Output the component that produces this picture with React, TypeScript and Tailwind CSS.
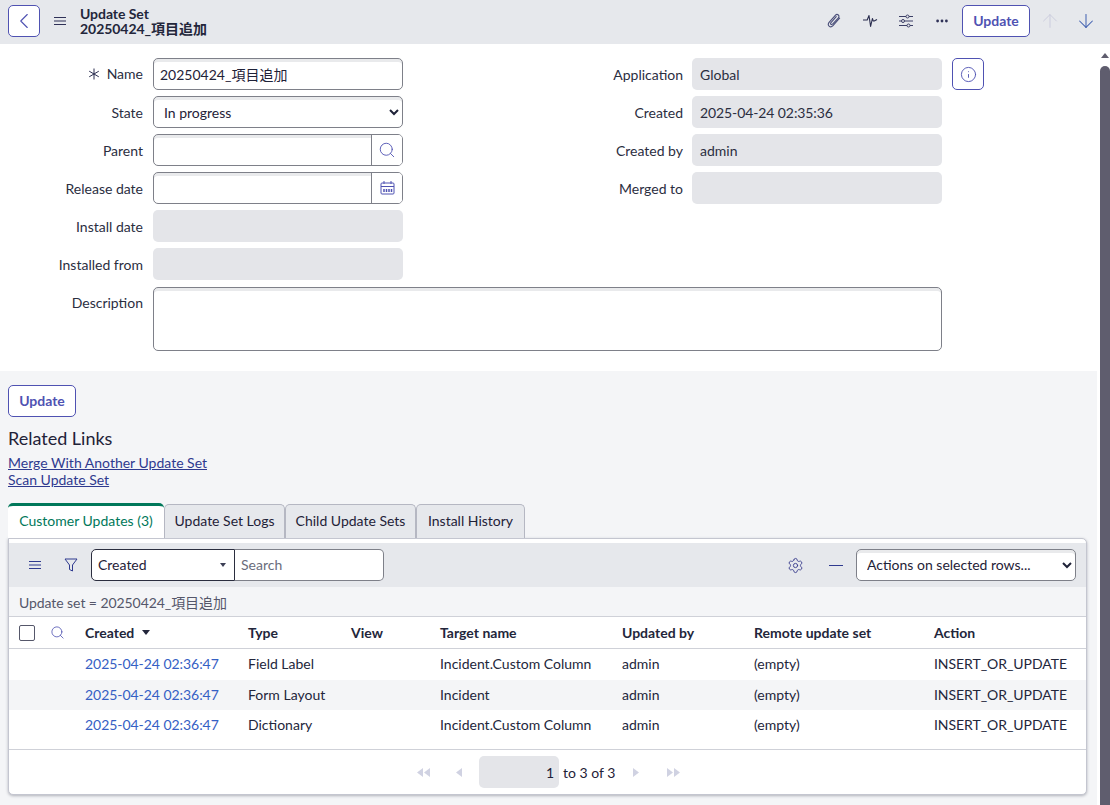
import React from 'react';
import { ArrowDown, ArrowUp, ChevronLeft, Info, Search, Settings } from 'lucide-react';

const cjk = "font-['Lato','Noto_Sans_CJK_JP',sans-serif]";

const MenuIcon = ({ className = '' }: { className?: string }) => (
  <svg width="12" height="8" viewBox="0 0 12 8" className={className} fill="none" stroke="currentColor" strokeWidth="1">
    <path d="M0 .5h12M0 4h12M0 7.500h12" />
  </svg>
);

const PaperclipIcon = () => (
  <svg width="16" height="16" viewBox="0 0 16 16" fill="none" stroke="#4b4f7a" strokeWidth="1.1" strokeLinecap="round">
    <path d="M13.6 5.2 7 12.6c-1.2 1.3-2.8 1.5-3.9.5-1.100-1-1-2.500.2-3.900l6-6.800c.9-1 2.100-1.200 3-.4.9.8.8 2-.1 3L6.600 11c-.5.600-1.200.7-1.700.3-.5-.4-.4-1.100.1-1.700l5.200-5.900" />
  </svg>
);

const PulseIcon = () => (
  <svg width="15" height="14" viewBox="0 0 15 14" fill="none" stroke="#2a2d4f" strokeWidth="1.1" strokeLinejoin="round">
    <path d="M0 6h4.200L6 1.500l1.600 11 1.800-8 .9 2.500h.9L14 5.500" />
  </svg>
);

const SlidersIcon = () => (
  <svg width="16" height="14" viewBox="0 0 16 14" fill="none" stroke="#3c3f66" strokeWidth="1">
    <path d="M1 2.500h7M11 2.500h4M1 7h2.500M6.500 7H15M1 11.500h8M12 11.500h3" />
    <circle cx="9.500" cy="2.500" r="1.500" />
    <circle cx="5" cy="7" r="1.500" />
    <circle cx="10.500" cy="11.500" r="1.500" />
  </svg>
);

const DotsIcon = () => (
  <svg width="12" height="4" viewBox="0 0 12 4" fill="#2f3157">
    <circle cx="1.600" cy="2" r="1.400" />
    <circle cx="6" cy="2" r="1.400" />
    <circle cx="10.400" cy="2" r="1.400" />
  </svg>
);

const AsteriskIcon = () => (
  <svg width="12" height="12" viewBox="0 0 12 12" fill="none" stroke="#2a2d4f" strokeWidth="1">
    <path d="M6 .5v11M1.200 3.200l9.600 5.600M10.800 3.200l-9.600 5.600" />
  </svg>
);

const CalendarIcon = () => (
  <svg width="15" height="14" viewBox="0 0 15 14" fill="none" stroke="#4f52b2" strokeWidth="1">
    <rect x="1" y="2" width="13" height="11" rx="1" />
    <path d="M1 5.500h13M4 0v3M11 0v3" />
    <path d="M4 8v3M6.500 8v3M9 8v3M11.500 8v3" strokeWidth="1.500" />
  </svg>
);

const FunnelIcon = () => (
  <svg width="14" height="14" viewBox="0 0 14 14" fill="none" stroke="#2f3a8f" strokeWidth="1">
    <path d="M1 1h12L8.500 7v6L5.500 11.500V7z" strokeLinejoin="round" />
  </svg>
);

const Triangles = ({ dir, double }: { dir: 'l' | 'r'; double?: boolean }) => {
  const one = dir === 'l' ? 'M6 0v9L0 4.500z' : 'M0 0v9l6-4.500z';
  return (
    <svg width={double ? 13 : 6} height="9" viewBox={double ? '0 0 13 9' : '0 0 6 9'} fill="#d0d2e2">
      <path d={one} />
      {double && <path d={one} transform="translate(7 0)" />}
    </svg>
  );
};

const inputBase =
  'h-8 rounded-[5px] border border-[#7e8089] bg-white shadow-[inset_0_3px_0_#e9eaec] text-[14px] text-[#1f2238]';

const Label = ({ children }: { children: React.ReactNode }) => (
  <div className="w-[143px] pr-0 text-right text-[14px] text-[#2b2e3f] shrink-0">{children}</div>
);

const ReadOnly = ({ value, className = 'w-[250px]' }: { value?: string; className?: string }) => (
  <div className={`${className} h-8 rounded-[5px] bg-[#e4e5e9] px-2 flex items-center text-[14px] text-[#2b2e3f]`}>{value}</div>
);

const LeftRow = ({ label, children }: { label: React.ReactNode; children: React.ReactNode }) => (
  <div className="flex items-center gap-[10px] h-8">
    <Label>{label}</Label>
    {children}
  </div>
);

const RightRow = ({ label, children }: { label: string; children: React.ReactNode }) => (
  <div className="flex items-center gap-[9px] h-8">
    <div className="w-[133px] text-right text-[14px] text-[#2b2e3f]">{label}</div>
    {children}
  </div>
);

const cols = 'grid grid-cols-[76px_163px_103px_89px_182px_132px_180px_1fr]';

const rows = [
  ['Field Label', 'Incident.Custom Column'],
  ['Form Layout', 'Incident'],
  ['Dictionary', 'Incident.Custom Column'],
];

export default function App() {
  return (
    <div className={`${cjk} w-[1110px] h-[805px] overflow-hidden bg-[#f4f5f7] text-[#1f2238] flex flex-col`}>
      <header className="h-11 shrink-0 bg-[#e6e8ec] flex items-center pl-2 pr-[13px] pb-[2px]">
        <button className="w-8 h-8 rounded-[5px] border border-[#4f52b2] bg-white flex items-center justify-center text-[#4f52b2]">
          <ChevronLeft size={26} strokeWidth={1} />
        </button>
        <MenuIcon className="ml-[14px] text-[#2f3157]" />
        <div className="ml-[14px] text-[14px] font-bold leading-[15px] text-[#23263b] tracking-[-0.05px]">
          <div>Update Set</div>
          <div>20250424_項目追加</div>
        </div>
        <div className="ml-auto flex items-center">
          <PaperclipIcon />
          <div className="ml-[21px]"><PulseIcon /></div>
          <div className="ml-5"><SlidersIcon /></div>
          <div className="ml-[22px]"><DotsIcon /></div>
          <button className="ml-[14px] w-[68px] h-8 pb-[2px] rounded-[5px] border border-[#4f52b2] bg-white text-[14px] font-bold text-[#4f52b2]">Update</button>
          <ArrowUp size={22} strokeWidth={1} className="ml-[9px] text-[#c9cbdc]" />
          <ArrowDown size={22} strokeWidth={1.1} className="ml-[14px] text-[#3f5fb0]" />
        </div>
      </header>

      <div className="flex-1 flex min-h-0">
        <div className="flex-1 min-w-0">
          <section className="bg-white h-[327px] pt-[14px]">
            <div className="flex">
              <div className="w-[403px] flex flex-col gap-[6px]">
                <LeftRow label={<span className="inline-flex items-center gap-[7px]"><AsteriskIcon />Name</span>}>
                  <input readOnly value="20250424_項目追加" className={`${inputBase} w-[250px] px-[6px] outline-none`} />
                </LeftRow>
                <LeftRow label="State">
                  <select defaultValue="In progress" className={`${inputBase} w-[250px] pl-[6px] outline-none`}>
                    <option>In progress</option>
                  </select>
                </LeftRow>
                <LeftRow label="Parent">
                  <div className={`${inputBase} w-[250px] flex justify-end overflow-hidden`}>
                    <div className="w-[31px] h-full bg-white border-l border-[#7e8089] flex items-center justify-center text-[#4f52b2]">
                      <Search size={18} strokeWidth={1.2} />
                    </div>
                  </div>
                </LeftRow>
                <LeftRow label="Release date">
                  <div className={`${inputBase} w-[250px] flex justify-end overflow-hidden`}>
                    <div className="w-[31px] h-full bg-white border-l border-[#7e8089] flex items-center justify-center">
                      <CalendarIcon />
                    </div>
                  </div>
                </LeftRow>
                <LeftRow label="Install date"><ReadOnly /></LeftRow>
                <LeftRow label="Installed from"><ReadOnly /></LeftRow>
              </div>
              <div className="ml-[147px] flex flex-col gap-[6px]">
                <RightRow label="Application">
                  <ReadOnly value="Global" />
                  <button className="ml-[1px] w-8 h-8 rounded-[5px] border border-[#4f52b2] flex items-center justify-center text-[#4f52b2]">
                    <Info size={17} strokeWidth={1.3} />
                  </button>
                </RightRow>
                <RightRow label="Created"><ReadOnly value="2025-04-24 02:35:36" className="w-[250px] tracking-[-0.1px]" /></RightRow>
                <RightRow label="Created by"><ReadOnly value="admin" /></RightRow>
                <RightRow label="Merged to"><ReadOnly /></RightRow>
              </div>
            </div>
            <div className="flex gap-[10px] mt-[7px]">
              <div className="w-[143px] pt-[5px] text-right text-[14px] text-[#2b2e3f]">Description</div>
              <div className={`${inputBase} w-[789px] h-16`} />
            </div>
          </section>

          <section className="pl-2 pt-[14px]">
            <button className="block w-[68px] h-8 pb-[2px] rounded-[5px] border border-[#4f52b2] bg-white text-[14px] font-bold text-[#4f52b2]">Update</button>
            <h2 className="mt-[9px] text-[18px] leading-[24px] text-[#1f2238]">Related Links</h2>
            <div className="mt-[4px] text-[14px] leading-[17px] text-[#2f3a8f] underline">
              <div>Merge With Another Update Set</div>
              <div>Scan Update Set</div>
            </div>

            <div className="mt-[16px] w-[1079px]">
              <div className="flex h-[34px] items-end text-[14px]">
                <div className="w-[156px] h-[35px] pb-[3px] bg-white rounded-t-[5px] border-t-[3px] border-[#00785a] flex items-center justify-center text-[#00785a] relative">Customer Updates (3)</div>
                <div className="w-[121px] h-[34px] pb-[2px] bg-[#e6e8ec] rounded-t-[5px] border border-b-0 border-[#b5b7c2] flex items-center justify-center">Update Set Logs</div>
                <div className="w-[131px] h-[34px] pb-[2px] bg-[#e6e8ec] rounded-t-[5px] border border-b-0 border-[#b5b7c2] flex items-center justify-center">Child Update Sets</div>
                <div className="w-[109px] h-[34px] pb-[2px] bg-[#e6e8ec] rounded-t-[5px] border border-b-0 border-[#b5b7c2] flex items-center justify-center">Install History</div>
              </div>

              <div className="h-[257px] bg-white rounded-b-[5px] rounded-tr-[5px] border border-[#c4c6d0] shadow-[0_1px_3px_#b0b2ba] flex flex-col overflow-hidden">
                <div className="mt-1 h-[44px] shrink-0 bg-[#e6e8ec] flex items-center pl-5 pr-[10px]">
                  <MenuIcon className="text-[#2f3a8f]" />
                  <div className="ml-[23px]"><FunnelIcon /></div>
                  <div className="ml-[13px] flex h-8">
                    <div className="w-[144px] h-8 pb-[2px] rounded-l-[5px] border border-[#2b2e3f] bg-white flex items-center justify-between pl-[6px] pr-[8px] text-[14px]">
                      Created
                      <span className="w-0 h-0 mt-[2px] border-x-[3px] border-x-transparent border-t-[4px] border-t-[#3c3f55]" />
                    </div>
                    <div className="w-[149px] h-8 pb-[2px] rounded-r-[5px] border border-l-0 border-[#7e8089] bg-white flex items-center pl-[6px] text-[14px] text-[#6a6c7c]">Search</div>
                  </div>
                  <Settings size={17} strokeWidth={1.3} className="ml-auto text-[#3c3f8f]" />
                  <div className="ml-[25px] w-[14px] h-px bg-[#2f3a8f]" />
                  <select defaultValue="a" className="ml-[13px] w-[220px] h-8 pb-[2px] rounded-[5px] border border-[#7e8089] bg-white pl-[6px] text-[14px] outline-none shadow-[inset_0_3px_0_#e9eaec]">
                    <option value="a">Actions on selected rows...</option>
                  </select>
                </div>
                <div className="h-[30px] pt-[2px] shrink-0 bg-[#f4f5f7] border-b border-[#cfd1d8] pl-[10px] flex items-center text-[14px] text-[#55576a] tracking-[-0.07px]">
                  Update set = 20250424_項目追加
                </div>
                <div className={`${cols} h-[32px] shrink-0 items-center border-b border-[#cfd1d8] text-[14px] font-bold text-[#23263b]`}>
                  <div className="flex items-center pl-[10px]">
                    <span className="w-4 h-4 rounded-[2px] border border-[#55576a] bg-white" />
                    <Search size={15} strokeWidth={1.3} className="ml-[15px] text-[#4f52b2]" />
                  </div>
                  <div className="flex items-center gap-[8px]">
                    Created
                    <span className="w-0 h-0 border-x-[4px] border-x-transparent border-t-[5px] border-t-[#23263b]" />
                  </div>
                  <div>Type</div>
                  <div>View</div>
                  <div>Target name</div>
                  <div>Updated by</div>
                  <div>Remote update set</div>
                  <div>Action</div>
                </div>
                <div className="flex-1">
                  {rows.map(([type, target], i) => (
                    <div key={i} className={`${cols} ${i === 0 ? 'h-[31px] pb-[3px]' : 'h-[30px] pb-[2px]'} items-center text-[14px] text-[#23263b] ${i === 1 ? 'bg-[#f4f5f7]' : 'bg-white'}`}>
                      <div />
                      <div className="text-[#3560c4] tracking-[-0.05px]">2025-04-24 02:36:47</div>
                      <div>{type}</div>
                      <div />
                      <div>{target}</div>
                      <div>admin</div>
                      <div>(empty)</div>
                      <div className="tracking-[-0.05px]">INSERT_OR_UPDATE</div>
                    </div>
                  ))}
                </div>
                <div className="h-[45px] shrink-0 border-t border-[#cfd1d8] flex items-center text-[14px] text-[#1f2238] pl-[408px]">
                  <Triangles dir="l" double />
                  <div className="ml-[26px]"><Triangles dir="l" /></div>
                  <div className="ml-[17px] w-[80px] h-8 rounded-[5px] bg-[#e4e5e9] flex items-center justify-end pr-[5px]">1</div>
                  <span className="ml-1">to 3 of 3</span>
                  <div className="ml-[18px]"><Triangles dir="r" /></div>
                  <div className="ml-[28px]"><Triangles dir="r" double /></div>
                </div>
              </div>
            </div>
          </section>
        </div>

        <div className="w-[13px] shrink-0 bg-white flex flex-col items-end">
          <div className="w-[10px] flex justify-center pt-[9px]">
            <span className="w-0 h-0 border-x-[4px] border-x-transparent border-b-[5px] border-b-[#5f5d6e]" />
          </div>
          <div className="mt-[8px] w-[10px] flex-1 rounded-t-[5px] bg-[#5f5d6e]" />
        </div>
      </div>
    </div>
  );
}
